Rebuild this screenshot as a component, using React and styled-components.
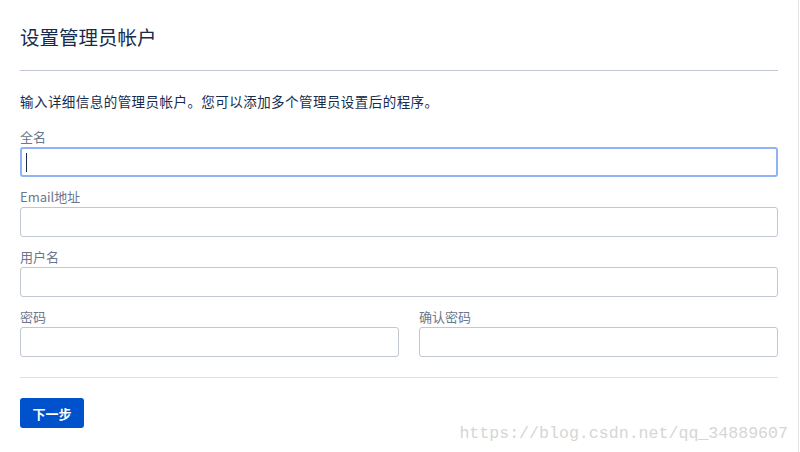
import styled, { createGlobalStyle } from "styled-components";

const GlobalStyle = createGlobalStyle`
  html, body {
    margin: 0;
    padding: 0;
    background: #ffffff;
  }
  body {
    font-family: "Noto Sans CJK SC", "Noto Sans", sans-serif;
    color: #172b4d;
  }
`;

const Page = styled.div`
  position: relative;
  box-sizing: border-box;
  width: 799px;
  height: 452px;
  padding: 0 20px;
  border-right: 1px solid #e4e5e9;
  overflow: hidden;
`;

const Header = styled.div`
  padding: 25px 0 21px;
  border-bottom: 1px solid #c1c7d0;
`;

const Title = styled.h1`
  margin: 0;
  font-size: 19.5px;
  line-height: 24px;
  font-weight: 400;
  color: #172b4d;
`;

const Intro = styled.p`
  margin: 20px 0 16px;
  font-size: 13.5px;
  letter-spacing: 0.45px;
  line-height: 20px;
  color: #172b4d;
`;

const Field = styled.div`
  display: flex;
  flex-direction: column;
  margin-bottom: 10px;
`;

const Label = styled.label`
  font-size: 13px;
  line-height: 20px;
  color: #6b778c;
`;

const Input = styled.input`
  box-sizing: border-box;
  height: 30px;
  width: 100%;
  padding: 0 6px;
  border: ${(p) => (p.$focused ? "2px solid #8fb3f4" : "1px solid #c1c7d0")};
  border-radius: 3px;
  background: #fff;
  font-family: inherit;
  font-size: 14px;
  outline: none;
`;

const Caret = styled.span`
  position: absolute;
  left: 26px;
  top: 153px;
  width: 1px;
  height: 19px;
  background: #172b4d;
`;

const Row = styled.div`
  display: grid;
  grid-template-columns: 379px 359px;
  column-gap: 20px;
`;

const Footer = styled.div`
  margin-top: 10px;
  padding-top: 20px;
  border-top: 1px solid #dfe1e6;
`;

const Button = styled.button`
  height: 30px;
  width: 64px;
  border: none;
  border-radius: 3px;
  background: #0052cc;
  color: #ffffff;
  font-family: inherit;
  font-size: 13px;
  font-weight: 700;
  cursor: pointer;
`;

const Watermark = styled.div`
  position: absolute;
  right: 10px;
  bottom: 6px;
  font-family: "Liberation Mono", monospace;
  font-size: 16.6px;
  line-height: 24px;
  color: #d6d6d6;
  pointer-events: none;
`;

export default function App() {
  return (
    <>
      <GlobalStyle />
      <Page>
        <Header>
          <Title>设置管理员帐户</Title>
        </Header>
        <Intro>输入详细信息的管理员帐户。您可以添加多个管理员设置后的程序。</Intro>
        <Field>
          <Label>全名</Label>
          <Input $focused />
        </Field>
        <Caret />
        <Field>
          <Label>Email地址</Label>
          <Input />
        </Field>
        <Field>
          <Label>用户名</Label>
          <Input />
        </Field>
        <Row>
          <Field>
            <Label>密码</Label>
            <Input type="password" />
          </Field>
          <Field>
            <Label>确认密码</Label>
            <Input type="password" />
          </Field>
        </Row>
        <Footer>
          <Button>下一步</Button>
        </Footer>
        <Watermark>https://blog.csdn.net/qq_34889607</Watermark>
      </Page>
    </>
  );
}
